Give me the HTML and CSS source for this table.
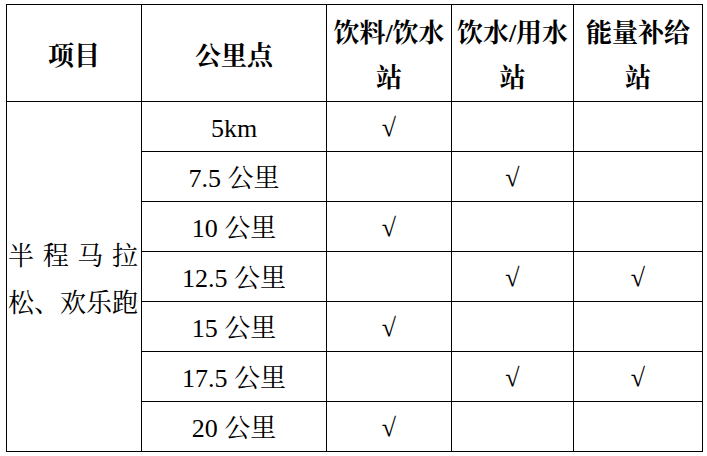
FILE: index.html
```html
<!DOCTYPE html>
<html lang="zh-CN">
<head>
<meta charset="utf-8">
<link rel="stylesheet" href="styles.css">
</head>
<body>
<table class="grid">
  <colgroup>
    <col class="c1"><col class="c2"><col class="c3"><col class="c4"><col class="c5">
  </colgroup>
  <thead>
    <tr class="head">
      <th>项目</th>
      <th>公里点</th>
      <th>饮料/饮水站</th>
      <th>饮水/用水站</th>
      <th>能量补给站</th>
    </tr>
  </thead>
  <tbody>
    <tr class="row">
      <td class="event" rowspan="7">半程马拉松、欢乐跑</td>
      <td>5km</td><td class="chk">√</td><td></td><td></td>
    </tr>
    <tr class="row"><td>7.5 公里</td><td></td><td class="chk">√</td><td></td></tr>
    <tr class="row"><td>10 公里</td><td class="chk">√</td><td></td><td></td></tr>
    <tr class="row"><td>12.5 公里</td><td></td><td class="chk">√</td><td class="chk">√</td></tr>
    <tr class="row"><td>15 公里</td><td class="chk">√</td><td></td><td></td></tr>
    <tr class="row"><td>17.5 公里</td><td></td><td class="chk">√</td><td class="chk">√</td></tr>
    <tr class="row"><td>20 公里</td><td class="chk">√</td><td></td><td></td></tr>
  </tbody>
</table>
</body>
</html>
```

FILE: styles.css
```css
html, body {
  margin: 0;
  padding: 0;
  background: #ffffff;
}

body {
  padding: 4px 0 0 6px;
  font-family: "Liberation Serif", "Noto Serif CJK SC", "Noto Sans CJK SC", serif;
  color: #000000;
}

.grid {
  border-collapse: collapse;
  table-layout: fixed;
  width: 696px;
}

.c1 { width: 135px; }
.c2 { width: 185px; }
.c3 { width: 125px; }
.c4 { width: 122px; }
.c5 { width: 129px; }

.grid th,
.grid td {
  border: 1px solid #000000;
  padding: 0 1px;
  text-align: center;
  vertical-align: middle;
  font-size: 26px;
}

.head th {
  height: 90px;
  line-height: 45px;
  font-weight: bold;
  padding-top: 6px;
  padding-bottom: 0;
}

.row td {
  height: 45px;
  line-height: 30px;
  padding-top: 4px;
  padding-bottom: 0;
}

.row td.chk {
  padding-top: 2px;
}

.row td.event {
  text-align: justify;
  line-height: 47px;
  padding: 6px 3px 0 1px;
}
```
